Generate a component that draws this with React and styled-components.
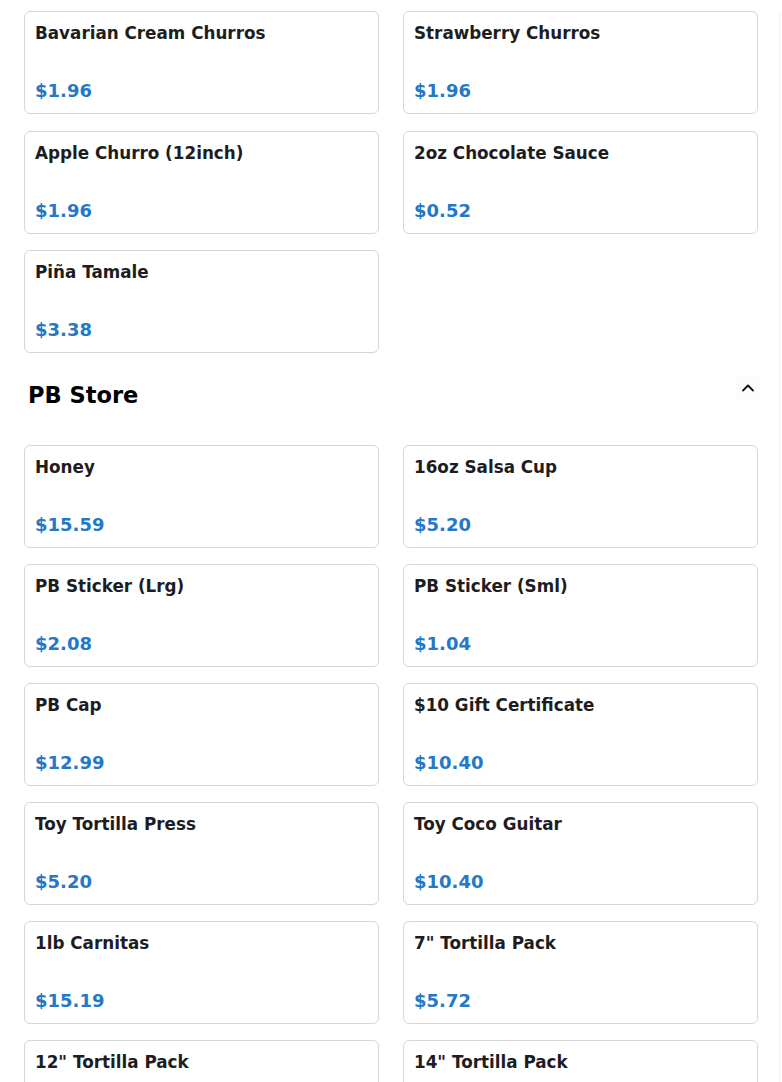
import React, { useState } from 'react';
import styled, { createGlobalStyle } from 'styled-components';
import { ChevronUp } from 'lucide-react';

const GlobalStyle = createGlobalStyle`
  body {
    margin: 0;
    background: #fff;
    font-family: "DejaVu Sans", "Liberation Sans", sans-serif;
  }
`;

const sweets = [
  { name: 'Bavarian Cream Churros', price: 1.96 },
  { name: 'Strawberry Churros', price: 1.96 },
  { name: 'Apple Churro (12inch)', price: 1.96 },
  { name: '2oz Chocolate Sauce', price: 0.52 },
  { name: 'Piña Tamale', price: 3.38 },
];

const store = [
  { name: 'Honey', price: 15.59 },
  { name: '16oz Salsa Cup', price: 5.2 },
  { name: 'PB Sticker (Lrg)', price: 2.08 },
  { name: 'PB Sticker (Sml)', price: 1.04 },
  { name: 'PB Cap', price: 12.99 },
  { name: '$10 Gift Certificate', price: 10.4 },
  { name: 'Toy Tortilla Press', price: 5.2 },
  { name: 'Toy Coco Guitar', price: 10.4 },
  { name: '1lb Carnitas', price: 15.19 },
  { name: '7" Tortilla Pack', price: 5.72 },
  { name: '12" Tortilla Pack', price: 7.28 },
  { name: '14" Tortilla Pack', price: 8.32 },
];

function Menu() {
  const [open, setOpen] = useState(true);

  return (
    <Page>
      <GlobalStyle />
      <Grid $top={11} $gap={16.5}>
        {sweets.map((item) => (
          <ItemCard key={item.name} item={item} />
        ))}
      </Grid>

      <SectionHeader>
        <SectionTitle>PB Store</SectionTitle>
        <ToggleButton onClick={() => setOpen(!open)} aria-label="Collapse section">
          <ChevronUp size={20} strokeWidth={2.2} />
        </ToggleButton>
      </SectionHeader>

      {open && (
        <Grid $top={37} $gap={16}>
          {store.map((item) => (
            <ItemCard key={item.name} item={item} />
          ))}
        </Grid>
      )}
    </Page>
  );
}

function ItemCard({ item }) {
  return (
    <Card>
      <ItemName>{item.name}</ItemName>
      <Price>${item.price.toFixed(2)}</Price>
    </Card>
  );
}

const Page = styled.div`
  width: 780px;
  min-height: 100vh;
  box-sizing: border-box;
  padding: 0 21px 40px 24px;
  border-right: 1px solid #f1f1f1;
`;

const Grid = styled.div`
  display: grid;
  grid-template-columns: repeat(2, 355px);
  column-gap: 24px;
  row-gap: ${(p) => p.$gap}px;
  margin-top: ${(p) => p.$top}px;
`;

const Card = styled.div`
  height: 103px;
  box-sizing: border-box;
  display: flex;
  flex-direction: column;
  justify-content: space-between;
  padding: 11px 10px 12px;
  border: 1px solid #d6d6d6;
  border-radius: 6px;
  background: #fff;
`;

const ItemName = styled.div`
  font-size: 16.8px;
  font-weight: 700;
  color: #1d1d1f;
`;

const Price = styled.div`
  font-size: 18px;
  font-weight: 700;
  color: #2478c6;
`;

const SectionHeader = styled.div`
  display: flex;
  align-items: flex-start;
  justify-content: space-between;
  margin-top: 23px;
  padding-left: 4px;
  margin-right: -2px;
`;

const SectionTitle = styled.h2`
  margin: 5.6px 0 0;
  font-size: 22.5px;
  font-weight: 700;
  color: #000;
`;

const ToggleButton = styled.button`
  width: 24px;
  height: 24px;
  display: flex;
  align-items: center;
  justify-content: center;
  padding: 0;
  border: none;
  border-radius: 4px;
  background: #fcfcfc;
  color: #111;
  cursor: pointer;
`;

export default Menu;
